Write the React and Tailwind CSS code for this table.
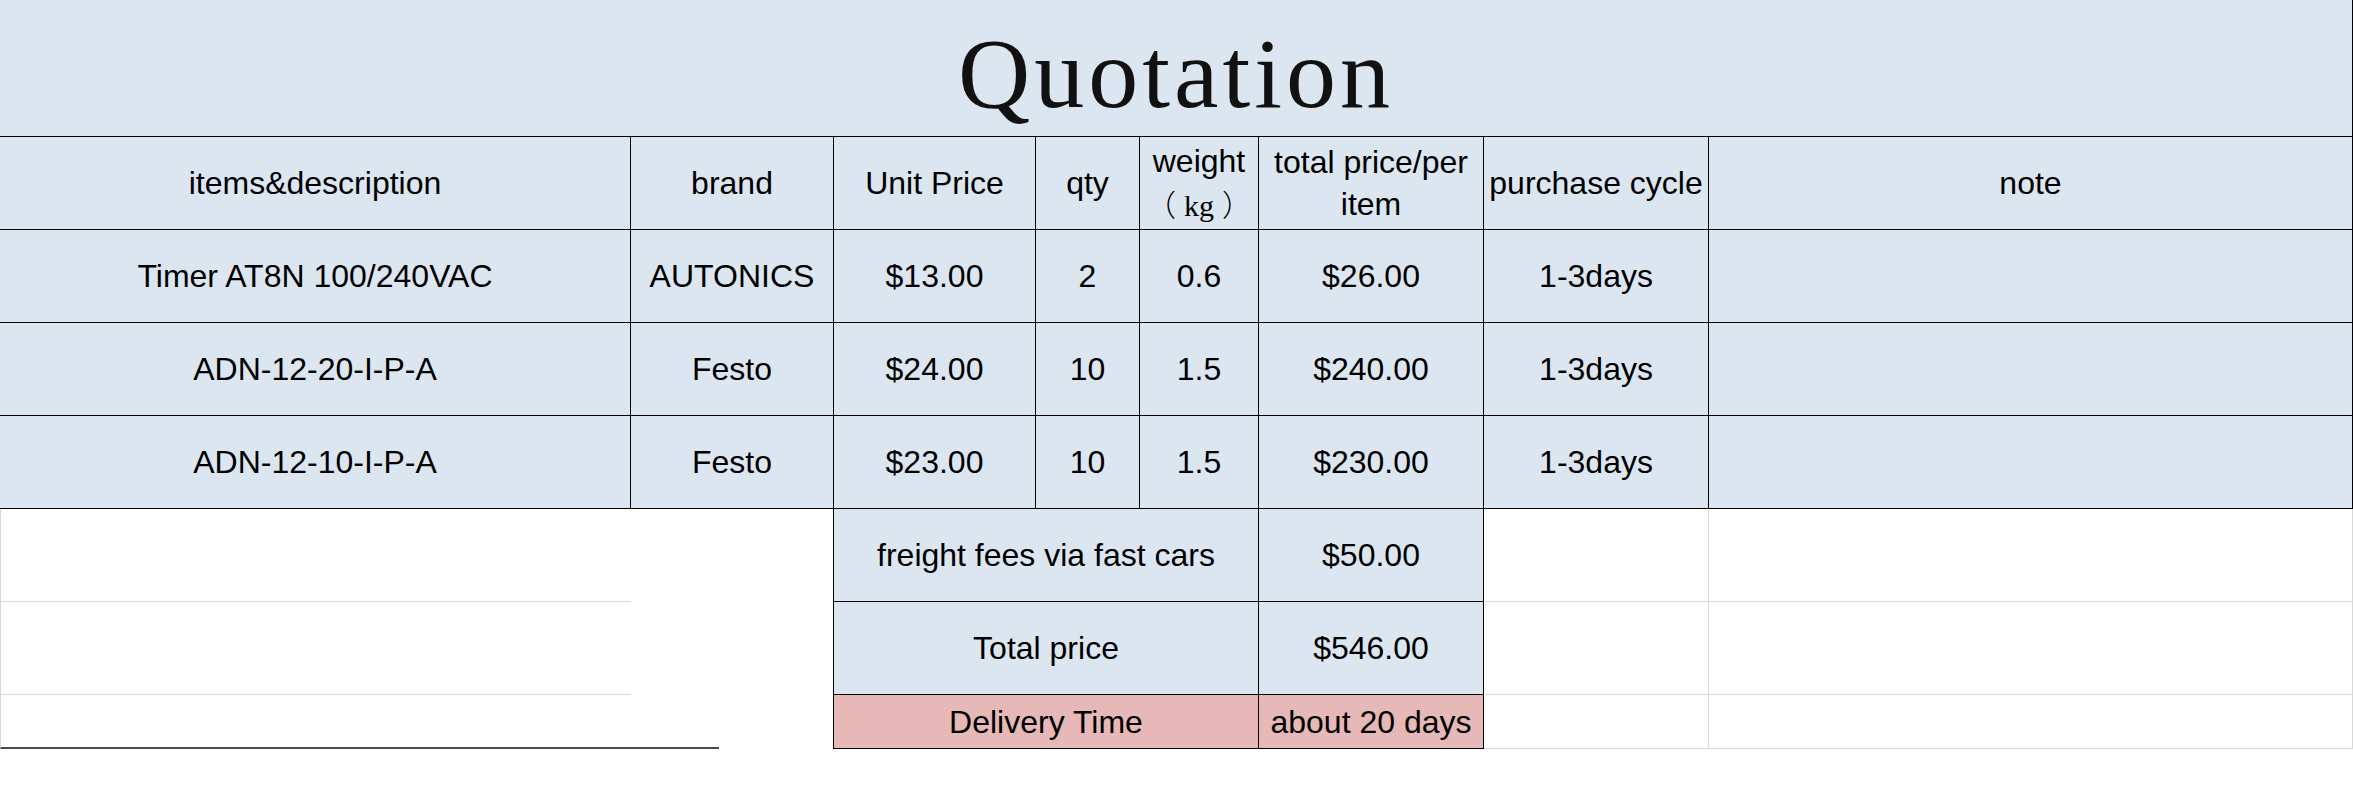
const items = [
  { name: "Timer AT8N 100/240VAC", brand: "AUTONICS", unit: "$13.00", qty: "2", weight: "0.6", total: "$26.00", cycle: "1-3days" },
  { name: "ADN-12-20-I-P-A", brand: "Festo", unit: "$24.00", qty: "10", weight: "1.5", total: "$240.00", cycle: "1-3days" },
  { name: "ADN-12-10-I-P-A", brand: "Festo", unit: "$23.00", qty: "10", weight: "1.5", total: "$230.00", cycle: "1-3days" },
]

const Cell = ({ className = "", children }) => (
  <div className={"flex items-center justify-center text-center whitespace-nowrap " + className}>{children}</div>
)

const App = () => {
  return (
    <div className="w-[2353px] h-[802px] bg-white text-black font-['Liberation_Sans',Arial,sans-serif] text-[32px] leading-[42px]">
      <div className="grid grid-cols-[631px_203px_202px_104px_119px_225px_225px_644px] grid-rows-[137px_93px_93px_93px_93px_93px_93px_54px]">
        {/* title */}
        <div className="col-span-8 flex justify-center pt-[24px] bg-[#dce6f1] border-b border-r border-black">
          <h1 className="font-['Liberation_Serif',serif] text-[100px] leading-none tracking-[4px] font-normal text-[#111]">Quotation</h1>
        </div>

        {/* header */}
        <Cell className="bg-[#dce6f1] border-b border-r border-black">items&amp;description</Cell>
        <Cell className="bg-[#dce6f1] border-b border-r border-black">brand</Cell>
        <Cell className="bg-[#dce6f1] border-b border-r border-black">Unit Price</Cell>
        <Cell className="bg-[#dce6f1] border-b border-r border-black">qty</Cell>
        <Cell className="bg-[#dce6f1] border-b border-r border-black flex-col">
          <span>weight</span>
          <span className="font-['Liberation_Serif','Noto_Sans_CJK_SC',serif] text-[30px] leading-[42px]">
            <span className="font-['Noto_Sans_CJK_SC',sans-serif] font-light">（</span>
            <span className="px-[8px]">kg</span>
            <span className="font-['Noto_Sans_CJK_SC',sans-serif] font-light">）</span>
          </span>
        </Cell>
        <Cell className="bg-[#dce6f1] border-b border-r border-black flex-col">
          <span>total price/per</span>
          <span>item</span>
        </Cell>
        <Cell className="bg-[#dce6f1] border-b border-r border-black">purchase cycle</Cell>
        <Cell className="bg-[#dce6f1] border-b border-r border-black">note</Cell>

        {/* items */}
        {items.map((it) => (
          <div key={it.name} className="contents">
            <Cell className="bg-[#dce6f1] border-b border-r border-black">{it.name}</Cell>
            <Cell className="bg-[#dce6f1] border-b border-r border-black">{it.brand}</Cell>
            <Cell className="bg-[#dce6f1] border-b border-r border-black">{it.unit}</Cell>
            <Cell className="bg-[#dce6f1] border-b border-r border-black">{it.qty}</Cell>
            <Cell className="bg-[#dce6f1] border-b border-r border-black">{it.weight}</Cell>
            <Cell className="bg-[#dce6f1] border-b border-r border-black">{it.total}</Cell>
            <Cell className="bg-[#dce6f1] border-b border-r border-black">{it.cycle}</Cell>
            <Cell className="bg-[#dce6f1] border-b border-r border-black"></Cell>
          </div>
        ))}

        {/* freight */}
        <div className="border-l border-b border-[#d9d9d9]"></div>
        <div className="border-r border-black"></div>
        <Cell className="col-span-3 bg-[#dce6f1] border-b border-r border-black">freight fees via fast cars</Cell>
        <Cell className="bg-[#dce6f1] border-b border-r border-black">$50.00</Cell>
        <div className="border-b border-r border-[#d9d9d9]"></div>
        <div className="border-b border-r border-[#d9d9d9]"></div>

        {/* total */}
        <div className="border-l border-b border-[#d9d9d9]"></div>
        <div className="border-r border-black"></div>
        <Cell className="col-span-3 bg-[#dce6f1] border-b border-r border-black">Total price</Cell>
        <Cell className="bg-[#dce6f1] border-b border-r border-black">$546.00</Cell>
        <div className="border-b border-r border-[#d9d9d9]"></div>
        <div className="border-b border-r border-[#d9d9d9]"></div>

        {/* delivery */}
        <div className="border-l border-[#d9d9d9] border-b-2 border-b-[#4a4a4a]"></div>
        <div className="flex flex-col justify-end border-r border-black">
          <div className="w-[88px] h-[2px] bg-[#4a4a4a]"></div>
        </div>
        <Cell className="col-span-3 bg-[#e6b8b7] border-b border-r border-black">Delivery Time</Cell>
        <Cell className="bg-[#e6b8b7] border-b border-r border-black">about 20 days</Cell>
        <div className="border-b border-r border-[#d9d9d9]"></div>
        <div className="border-b border-r border-[#d9d9d9]"></div>
      </div>
    </div>
  )
}

export default App
